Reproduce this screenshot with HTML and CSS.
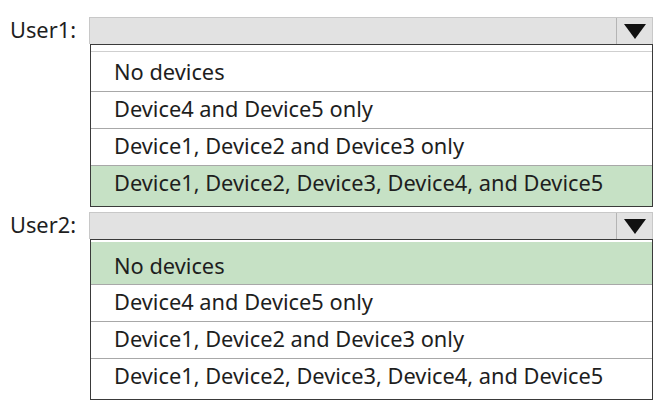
FILE: index.html
```html
<!DOCTYPE html>
<html lang="en">
<head>
    <meta charset="UTF-8">
    <title>Device assignment</title>
    <link rel="stylesheet" href="styles.css">
</head>
<body>
<div class="field field-first">
    <div class="field-label">User1:</div>
    <div class="select-bar">
        <div class="select-value"></div>
        <div class="select-arrow">
            <svg width="22" height="15" viewBox="0 0 22 15"><polygon points="0,0 22,0 11,15" fill="#111"/></svg>
        </div>
    </div>
    <ul class="options options-first">
        <li class="option">No devices</li>
        <li class="option">Device4 and Device5 only</li>
        <li class="option">Device1, Device2 and Device3 only</li>
        <li class="option selected">Device1, Device2, Device3, Device4, and Device5</li>
    </ul>
</div>
<div class="field">
    <div class="field-label">User2:</div>
    <div class="select-bar">
        <div class="select-value"></div>
        <div class="select-arrow">
            <svg width="22" height="15" viewBox="0 0 22 15"><polygon points="0,0 22,0 11,15" fill="#111"/></svg>
        </div>
    </div>
    <ul class="options options-second">
        <li class="option selected">No devices</li>
        <li class="option">Device4 and Device5 only</li>
        <li class="option">Device1, Device2 and Device3 only</li>
        <li class="option">Device1, Device2, Device3, Device4, and Device5</li>
    </ul>
</div>
</body>
</html>
```

FILE: styles.css
```css
body {
    margin: 0;
    padding-top: 17px;
    background-color: white;
    color: #1e1e1e;
    font-family: 'Noto Sans', 'Open Sans', sans-serif;
    font-size: 21.8px;
}
.field {
    display: grid;
    grid-template-columns: 89px 564px;
}
.field + .field {
    margin-top: 5px;
}
.field-label {
    padding-left: 10px;
    line-height: 25px;
}
.select-bar {
    display: flex;
    height: 26px;
    background-color: #e2e2e2;
    border: 1px solid #c8c8c8;
    border-bottom: none;
}
.select-value {
    flex: 1;
}
.select-arrow {
    width: 35px;
    border-left: 1px solid #b4b4b4;
    display: flex;
    align-items: center;
    justify-content: center;
}
.options {
    grid-column: 2;
    list-style: none;
    margin: 0 0 0 1px;
    padding: 0;
    border: 1px solid #3a3a3a;
}
.option {
    height: 36px;
    line-height: 34px;
    padding-left: 23px;
    border-bottom: 1px solid #a8a8a8;
}
.option:last-child {
    border-bottom: none;
    padding-bottom: 4px;
}
.option.selected {
    background-color: #c6e1c5;
}
.options-first {
    padding-top: 6px;
}
.options-first .option:first-child {
    border-top: 1px solid #cfcfcf;
    padding-top: 3px;
}
.options-second {
    padding-top: 2px;
}
.options-second .option:first-child {
    padding-top: 7px;
    height: 35px;
}
```
